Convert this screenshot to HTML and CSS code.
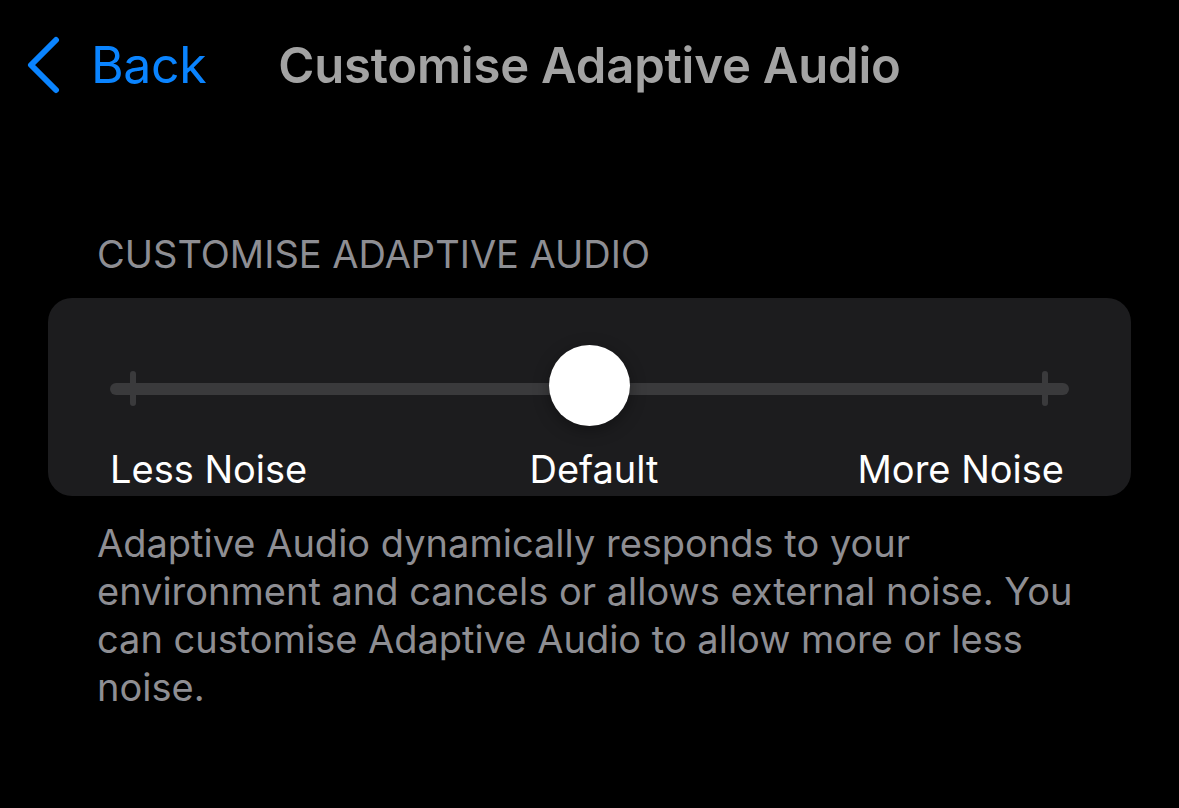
FILE: index.html
```html
<!DOCTYPE html>
<html lang="en">
<head>
    <meta charset="UTF-8">
    <meta name="viewport" content="width=device-width, initial-scale=1.0">
    <title>Customise Adaptive Audio</title>
    <link rel="stylesheet" href="styles.css">
</head>
<body>

    <!-- Navigation Bar -->
    <nav class="nav-bar">
        <a class="back-link" href="#">
            <svg class="chevron" width="36" height="58" viewBox="0 0 36 58" aria-hidden="true">
                <path d="M31 4 L6 29 L31 54" fill="none" stroke="#0a84ff" stroke-width="6" stroke-linecap="round" stroke-linejoin="round"/>
            </svg>
            <span>Back</span>
        </a>
        <h1 class="nav-title">Customise Adaptive Audio</h1>
        <div class="nav-spacer"></div>
    </nav>

    <!-- Settings Group -->
    <section class="group">
        <h2 class="group-header">CUSTOMISE ADAPTIVE AUDIO</h2>

        <div class="card">
            <div class="slider">
                <div class="track">
                    <span class="tick"></span>
                    <span class="tick"></span>
                </div>
                <div class="thumb"></div>
            </div>
            <div class="slider-labels">
                <span>Less Noise</span>
                <span class="label-mid">Default</span>
                <span class="label-end">More Noise</span>
            </div>
        </div>

        <p class="group-footer">Adaptive Audio dynamically responds to your environment and cancels or allows external noise. You can customise Adaptive Audio to allow more or less noise.</p>
    </section>

</body>
</html>
```

FILE: styles.css
```css
/* Reset */
* {
    margin: 0;
    padding: 0;
    box-sizing: border-box;
}

body {
    font-family: Inter, "Noto Sans", sans-serif;
    background-color: #000;
    color: #fff;
    width: 1179px;
    height: 808px;
    overflow: hidden;
}

/* Navigation Bar */
.nav-bar {
    display: grid;
    grid-template-columns: 1fr auto 1fr;
    align-items: center;
    height: 130px;
    padding: 0 25px;
}

.back-link {
    display: flex;
    align-items: center;
    gap: 30px;
    color: #0a84ff;
    text-decoration: none;
    font-size: 50px;
    letter-spacing: -0.4px;
}

.chevron {
    display: block;
}

.nav-title {
    font-size: 49px;
    font-weight: 600;
    color: #a3a3a3;
    letter-spacing: -0.2px;
}

/* Group */
.group {
    padding: 0 48px;
}

.group-header {
    font-size: 38px;
    font-weight: 400;
    color: #8e8e93;
    padding: 100px 0 0 49px;
    line-height: 48px;
    margin-bottom: 20px;
}

.card {
    background-color: #1c1c1e;
    border-radius: 24px;
    height: 198px;
    padding: 47px 62px 0 62px;
}

/* Slider */
.slider {
    position: relative;
    height: 81px;
    display: flex;
    align-items: center;
}

.track {
    flex: 1;
    height: 12px;
    border-radius: 6px;
    background-color: #3a3a3c;
    display: flex;
    justify-content: space-between;
    align-items: center;
    padding: 0 21px 0 20px;
    margin-top: 6px;
}

.tick {
    width: 6px;
    height: 35px;
    border-radius: 3px;
    background-color: #3a3a3c;
}

.thumb {
    position: absolute;
    left: 439px;
    top: 0;
    width: 81px;
    height: 81px;
    border-radius: 50%;
    background-color: #fff;
    box-shadow: 0 4px 16px rgba(0, 0, 0, 0.35);
}

.slider-labels {
    display: grid;
    grid-template-columns: 1fr auto 1fr;
    margin-top: 19px;
    padding-right: 5px;
    font-size: 38px;
    line-height: 48px;
    color: #fff;
}

.label-mid {
    margin-left: 14px;
}

.label-end {
    text-align: right;
}

.group-footer {
    font-size: 38px;
    line-height: 48px;
    color: #8e8e93;
    padding: 23px 0 0 49px;
}
```
